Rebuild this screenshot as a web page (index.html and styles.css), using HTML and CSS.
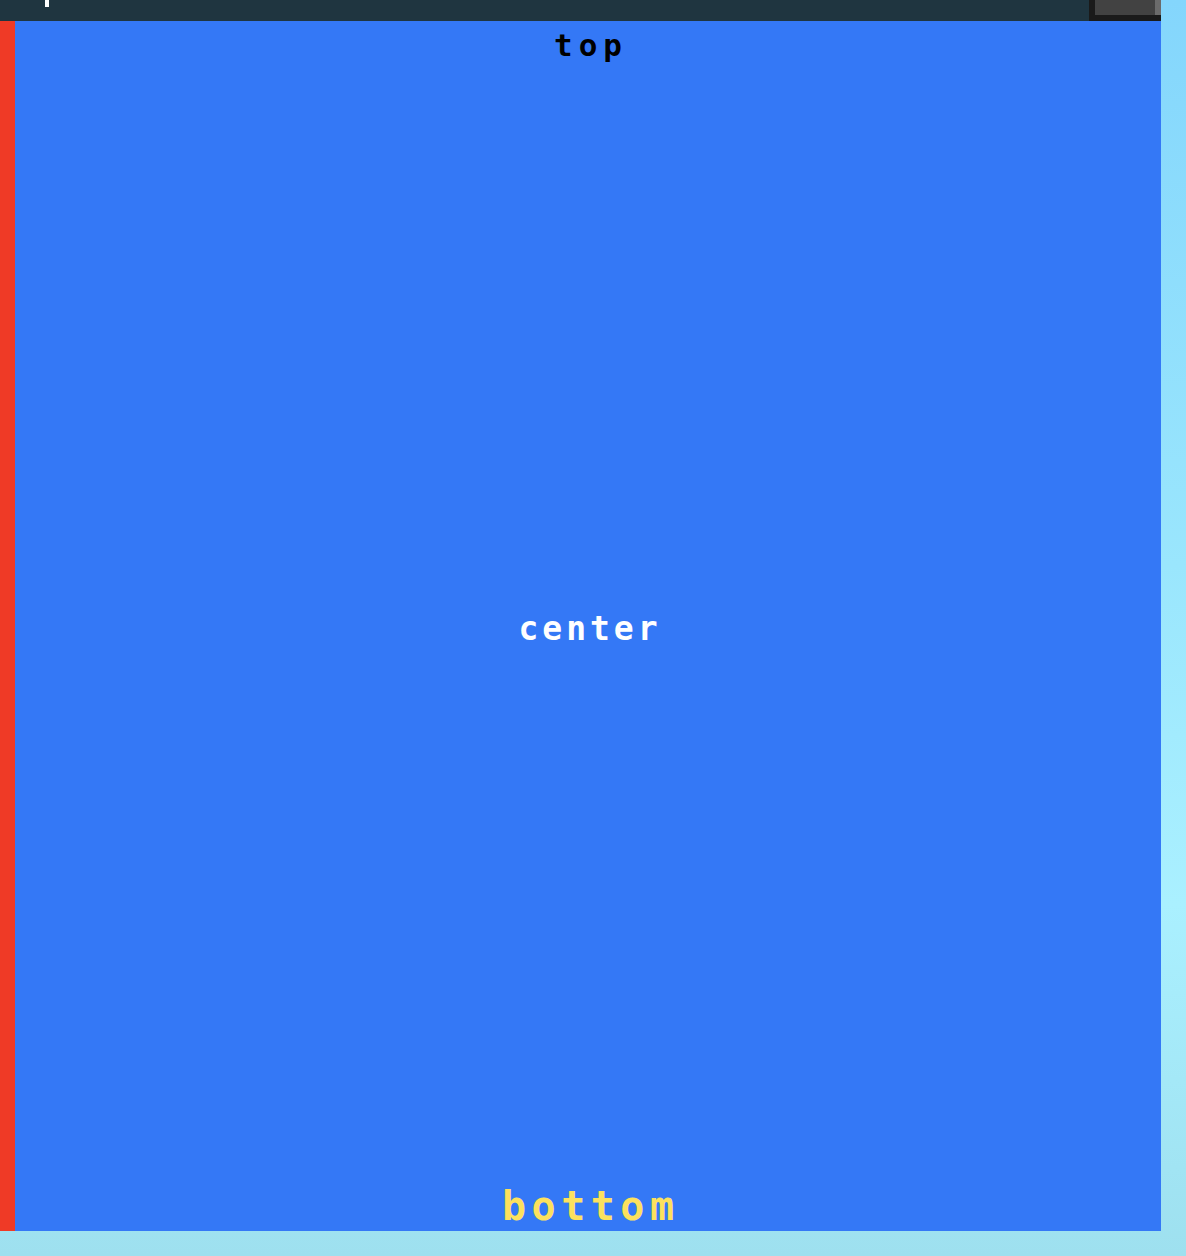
FILE: index.html
```html
<!DOCTYPE html>
<html>
<head>
<meta charset="utf-8">
<link rel="stylesheet" href="styles.css">
</head>
<body>
<div class="frame">
  <div class="topbar">
    <div class="bar-fill"><span class="mark"></span></div>
    <div class="widget">
      <div class="widget-row">
        <span class="widget-main"></span>
        <span class="widget-edge"></span>
      </div>
    </div>
  </div>
  <div class="main">
    <div class="rail"></div>
    <div class="panel">
      <div class="label label-top">top</div>
      <div class="label label-center">center</div>
      <div class="label label-bottom">bottom</div>
    </div>
  </div>
</div>
</body>
</html>
```

FILE: styles.css
```css
html, body {
  margin: 0;
  padding: 0;
}
body {
  width: 1186px;
  height: 1256px;
  overflow: hidden;
  background: linear-gradient(to bottom, #84d6fc 0%, #9ae6fd 45%, #aaf0ff 72%, #9ee0ef 100%);
  font-family: "DejaVu Sans Mono", "Liberation Mono", monospace;
}
.frame {
  width: 1161px;
  display: flex;
  flex-direction: column;
}
.topbar {
  height: 21px;
  display: flex;
}
.bar-fill {
  flex: 1;
  background: #1f3540;
  padding-left: 45px;
}
.mark {
  display: block;
  width: 4px;
  height: 7px;
  background: #ffffff;
}
.widget {
  width: 72px;
  background: #1a1a1a;
  padding-left: 6px;
  box-sizing: border-box;
}
.widget-row {
  display: flex;
  height: 15px;
}
.widget-main {
  width: 60px;
  background: #424242;
}
.widget-edge {
  width: 6px;
  background: #6b6b6b;
}
.main {
  display: flex;
  height: 1210px;
}
.rail {
  width: 15px;
  background: #ef3a26;
}
.panel {
  flex: 1;
  background: #3478f6;
  display: grid;
  grid-template-rows: 1fr auto 1fr;
  justify-items: center;
}
.label {
  line-height: 1;
  font-weight: bold;
}
.label-top {
  align-self: start;
  font-size: 31px;
  letter-spacing: 6px;
  padding-left: 6px;
  color: #000000;
  padding-top: 9px;
}
.label-center {
  font-size: 33px;
  letter-spacing: 4px;
  padding-left: 4px;
  color: #ffffff;
  padding-top: 5px;
}
.label-bottom {
  align-self: end;
  font-size: 40px;
  letter-spacing: 5.5px;
  padding-left: 5.5px;
  color: #fce15e;
  padding-bottom: 5px;
}
```
